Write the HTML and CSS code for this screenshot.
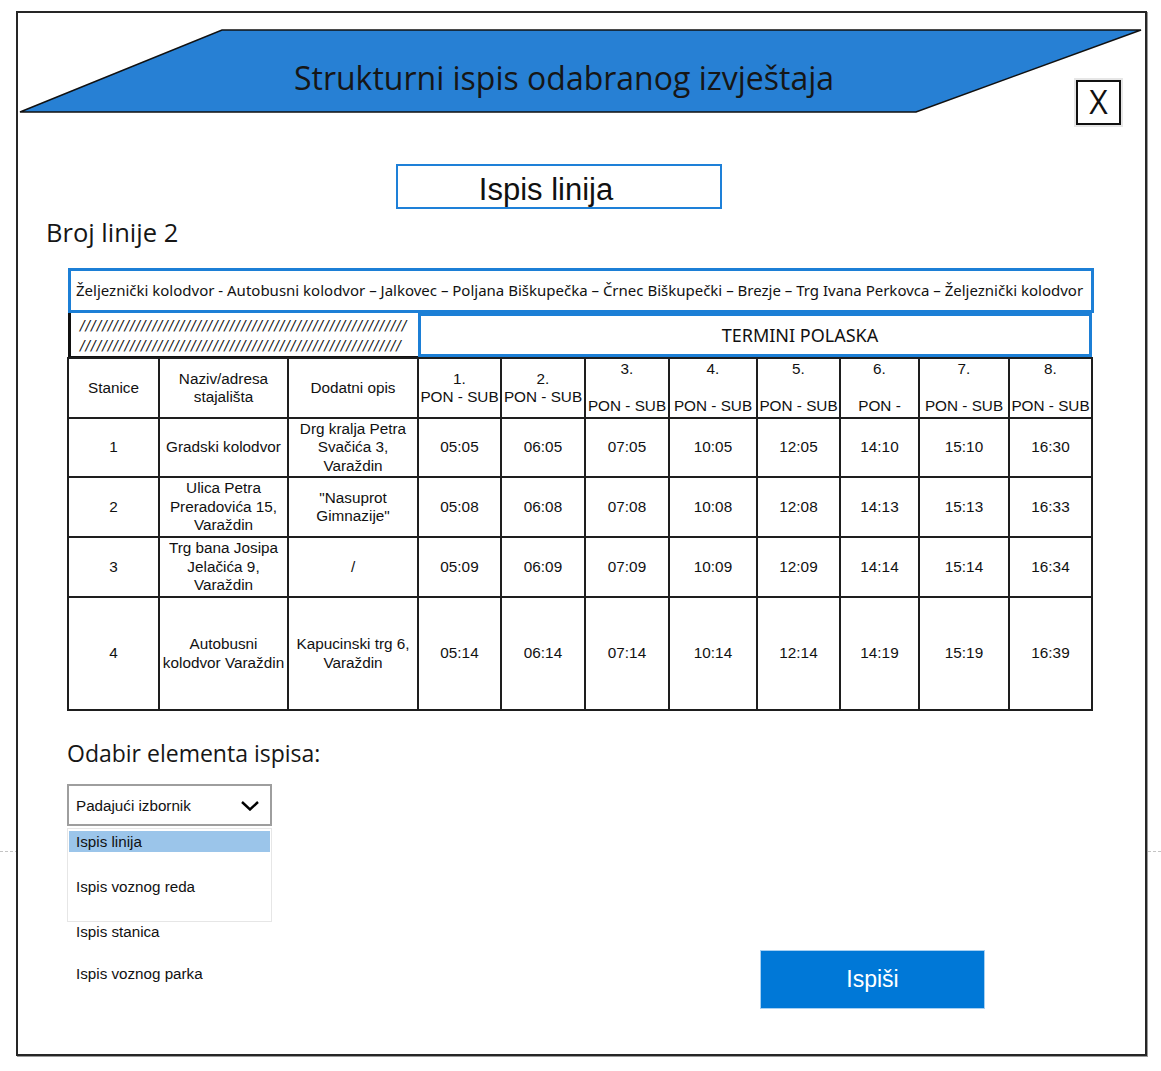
FILE: index.html
```html
<!DOCTYPE html>
<html lang="hr">
<head>
<meta charset="utf-8">
<title>Strukturni ispis odabranog izvještaja</title>
<link rel="stylesheet" href="styles.css">
</head>
<body>
<div class="dash-line"></div>
<div class="frame">
  <header class="header">
    <svg class="banner-shape" width="1127" height="84" viewBox="0 0 1127 84">
      <polygon points="2,83 204,1 1123,1 898,83" fill="#2780d4" stroke="#111" stroke-width="1.5"/>
    </svg>
    <h1 class="title">Strukturni ispis odabranog izvještaja</h1>
    <div class="close-btn">X</div>
  </header>

  <div class="report-type">Ispis linija</div>

  <h2 class="line-no">Broj linije 2</h2>

  <div class="route">Željeznički kolodvor - Autobusni kolodvor – Jalkovec – Poljana Biškupečka – Črnec Biškupečki – Brezje – Trg Ivana Perkovca – Željeznički kolodvor</div>

  <div class="subhead">
    <div class="slashes">
      <div>///////////////////////////////////////////////////////////</div>
      <div>//////////////////////////////////////////////////////////</div>
    </div>
    <div class="termini">TERMINI POLASKA</div>
  </div>

  <table class="timetable">
    <colgroup>
      <col style="width:91px"><col style="width:129px"><col style="width:130px">
      <col style="width:83px"><col style="width:84px"><col style="width:84px">
      <col style="width:88px"><col style="width:83px"><col style="width:79px">
      <col style="width:90px"><col style="width:83px">
    </colgroup>
    <tr class="head-row">
      <td>Stanice</td>
      <td>Naziv/adresa<br>stajališta</td>
      <td>Dodatni opis</td>
      <td>1.<br>PON - SUB</td>
      <td>2.<br>PON - SUB</td>
      <td>3.<br><br>PON - SUB</td>
      <td>4.<br><br>PON - SUB</td>
      <td>5.<br><br>PON - SUB</td>
      <td>6.<br><br>PON -</td>
      <td>7.<br><br>PON - SUB</td>
      <td>8.<br><br>PON - SUB</td>
    </tr>
    <tr class="r1">
      <td>1</td>
      <td>Gradski kolodvor</td>
      <td>Drg kralja Petra<br>Svačića 3,<br>Varaždin</td>
      <td>05:05</td><td>06:05</td><td>07:05</td><td>10:05</td><td>12:05</td><td>14:10</td><td>15:10</td><td>16:30</td>
    </tr>
    <tr class="r2">
      <td>2</td>
      <td>Ulica Petra<br>Preradovića 15,<br>Varaždin</td>
      <td>"Nasuprot<br>Gimnazije"</td>
      <td>05:08</td><td>06:08</td><td>07:08</td><td>10:08</td><td>12:08</td><td>14:13</td><td>15:13</td><td>16:33</td>
    </tr>
    <tr class="r3">
      <td>3</td>
      <td>Trg bana Josipa<br>Jelačića 9,<br>Varaždin</td>
      <td>/</td>
      <td>05:09</td><td>06:09</td><td>07:09</td><td>10:09</td><td>12:09</td><td>14:14</td><td>15:14</td><td>16:34</td>
    </tr>
    <tr class="r4">
      <td>4</td>
      <td>Autobusni<br>kolodvor Varaždin</td>
      <td>Kapucinski trg 6,<br>Varaždin</td>
      <td>05:14</td><td>06:14</td><td>07:14</td><td>10:14</td><td>12:14</td><td>14:19</td><td>15:19</td><td>16:39</td>
    </tr>
  </table>

  <h2 class="pick-title">Odabir elementa ispisa:</h2>

  <div class="bottom">
    <div class="picker">
      <div class="select">
        <span>Padajući izbornik</span>
        <svg class="chevron" width="18" height="10" viewBox="0 0 18 10">
          <polyline points="1,1 9,8.5 17,1" fill="none" stroke="#000" stroke-width="2.4"/>
        </svg>
      </div>
      <div class="options">
        <div class="opt active">Ispis linija</div>
        <div class="opt opt-2">Ispis voznog reda</div>
      </div>
      <div class="opt-out">Ispis stanica</div>
      <div class="opt-out opt-last">Ispis voznog parka</div>
    </div>
    <button class="print-btn">Ispiši</button>
  </div>
</div>
</body>
</html>
```

FILE: styles.css
```css
* { box-sizing: border-box; }

html, body {
  margin: 0;
  padding: 0;
  background: #fff;
}

body {
  position: relative;
  width: 1161px;
  height: 1071px;
  overflow: hidden;
  padding-top: 11px;
  padding-left: 16px;
  font-family: "Liberation Sans", Arial, sans-serif;
  color: #111;
}

.dash-line {
  position: absolute;
  left: 0;
  right: 0;
  top: 851px;
  border-top: 1px dashed #c4c4c4;
}

.frame {
  position: relative;
  z-index: 1;
  width: 1131px;
  height: 1045px;
  border: 2px solid #262626;
  box-shadow: 1px 1px 0 #9a9a9a;
  background: #fff;
}

/* Header */
.header {
  display: grid;
  grid-template-columns: 1fr;
  padding-top: 16px;
}

.header > * {
  grid-area: 1 / 1;
}

.banner-shape {
  display: block;
  align-self: start;
}

.title {
  margin: 7px 35px 0 0;
  align-self: start;
  justify-self: center;
  height: 84px;
  line-height: 84px;
  font-family: "Open Sans", "Noto Sans", sans-serif;
  font-weight: 400;
  font-size: 32px;
  color: #161616;
  white-space: nowrap;
}

.close-btn {
  justify-self: end;
  align-self: start;
  margin-top: 51px;
  margin-right: 24px;
  width: 45px;
  height: 45px;
  border: 2px solid #111;
  box-shadow: 0 0 0 2px #e6e6e6;
  text-align: center;
  line-height: 40px;
  font-family: "Open Sans", "Noto Sans", sans-serif;
  font-size: 32px;
  color: #111;
}

/* Report type box */
.report-type {
  margin-top: 39px;
  margin-left: 378px;
  width: 326px;
  height: 45px;
  border: 2px solid #1e80d8;
  text-align: center;
  padding-right: 26px;
  padding-top: 3px;
  line-height: 41px;
  font-size: 31px;
  color: #111;
}

.line-no {
  margin: 7px 0 0 28px;
  font-family: "Open Sans", "Noto Sans", sans-serif;
  font-weight: 400;
  font-size: 25.5px;
  line-height: 32px;
  color: #161616;
}

/* Route */
.route {
  margin-top: 20px;
  margin-left: 50px;
  width: 1026px;
  height: 45px;
  border: 3px solid #1c7fd6;
  padding-left: 5px;
  line-height: 38px;
  font-family: "Noto Sans", "Open Sans", sans-serif;
  font-size: 15px;
  color: #111;
  white-space: nowrap;
}

.subhead {
  display: flex;
  margin-left: 50px;
  width: 1024px;
  height: 44px;
}

.slashes {
  width: 350px;
  border-left: 3px solid #111;
  border-bottom: 1px solid #111;
  padding: 2px 0 0 9px;
  font-family: "DejaVu Sans", sans-serif;
  font-style: italic;
  font-size: 13.5px;
  letter-spacing: 1.0px;
  line-height: 20px;
  color: #111;
  white-space: nowrap;
  overflow: hidden;
}

.termini {
  flex: 1;
  border: 3px solid #1c7fd6;
  text-align: center;
  padding-left: 90px;
  line-height: 38px;
  font-family: "Noto Sans", "Open Sans", sans-serif;
  font-size: 18px;
  color: #111;
}

/* Table */
.timetable {
  margin-left: 49px;
  width: 1024px;
  table-layout: fixed;
  border-collapse: collapse;
  font-size: 15.3px;
  line-height: 18.5px;
  color: #111;
}

.timetable td {
  border: 2px solid #1e1e1e;
  padding: 0;
  text-align: center;
  vertical-align: middle;
  white-space: nowrap;
  overflow: hidden;
}

.head-row td { height: 60px; }
.r1 td { height: 59px; }
.r2 td { height: 60px; }
.r3 td { height: 60px; }
.r4 td { height: 113px; }

/* Bottom */
.pick-title {
  margin: 26px 0 0 49px;
  font-family: "Open Sans", "Noto Sans", sans-serif;
  font-weight: 400;
  font-size: 23px;
  line-height: 32px;
  color: #161616;
}

.bottom {
  display: flex;
  align-items: flex-start;
  margin-top: 15px;
  margin-left: 49px;
}

.picker {
  width: 205px;
  font-size: 15.2px;
  color: #111;
}

.select {
  display: flex;
  align-items: center;
  justify-content: space-between;
  height: 42px;
  border: 2px solid #9e9e9e;
  padding: 0 11px 0 7px;
}

.chevron { display: block; margin-top: 1px; }

.options {
  margin-top: 2px;
  height: 94px;
  border: 1px solid #e6e6e6;
  padding: 2px 1px 0;
}

.opt {
  height: 21px;
  line-height: 21px;
  padding-left: 7px;
}

.opt.active {
  background: #9bc5ea;
}

.opt-2 {
  margin-top: 24px;
}

.opt-out {
  height: 20px;
  line-height: 20px;
  padding-left: 9px;
}

.opt-last {
  margin-top: 22px;
}

.print-btn {
  margin-left: 488px;
  margin-top: 166px;
  width: 225px;
  height: 59px;
  border: 1px solid #a6d0f2;
  background: #0078d7;
  color: #fff;
  font-family: "Liberation Sans", Arial, sans-serif;
  font-size: 23px;
  padding: 0;
}
```
